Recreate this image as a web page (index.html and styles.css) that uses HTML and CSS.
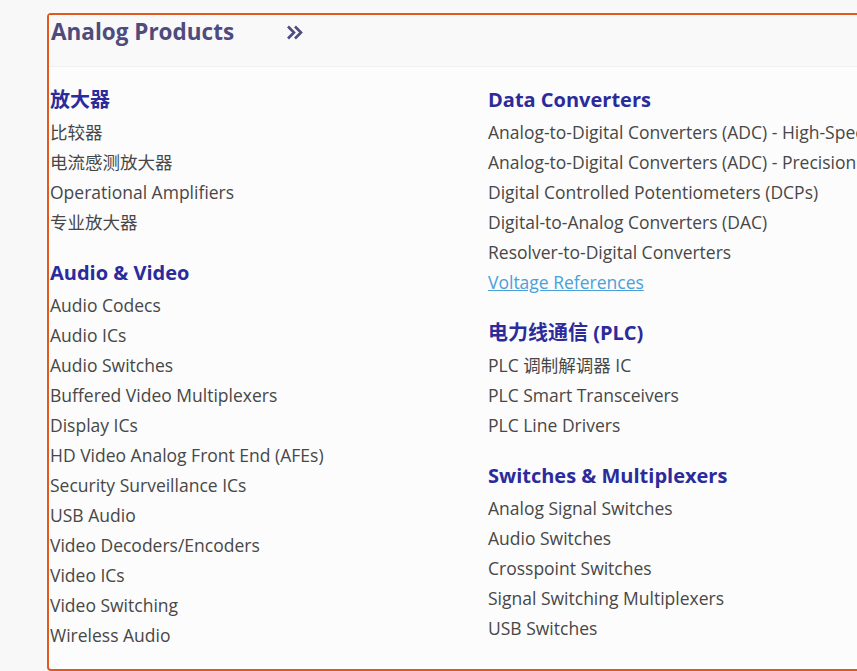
FILE: index.html
```html
<!DOCTYPE html>
<html lang="zh-CN">

<head>
    <meta charset="UTF-8">
    <meta name="viewport" content="width=device-width, initial-scale=1.0">
    <title>Analog Products</title>
    <link rel="stylesheet" href="styles.css">
</head>

<body>
    <div class="panel">
        <header class="panel-head">
            <h2>Analog Products</h2>
            <a class="more" href="#">
                <svg width="17" height="15" viewBox="0 0 17 15">
                    <path d="M2 1.5 L8 7.5 L2 13.5 M9 1.5 L15 7.5 L9 13.5" fill="none" stroke="#4f4b7d" stroke-width="2.6" />
                </svg>
            </a>
        </header>

        <div class="columns">
            <div class="col">
                <div class="group">
                    <h3>放大器</h3>
                    <ul>
                        <li><a href="#">比较器</a></li>
                        <li><a href="#">电流感测放大器</a></li>
                        <li><a href="#">Operational Amplifiers</a></li>
                        <li><a href="#">专业放大器</a></li>
                    </ul>
                </div>
                <div class="group">
                    <h3>Audio &amp; Video</h3>
                    <ul>
                        <li><a href="#">Audio Codecs</a></li>
                        <li><a href="#">Audio ICs</a></li>
                        <li><a href="#">Audio Switches</a></li>
                        <li><a href="#">Buffered Video Multiplexers</a></li>
                        <li><a href="#">Display ICs</a></li>
                        <li><a href="#">HD Video Analog Front End (AFEs)</a></li>
                        <li><a href="#">Security Surveillance ICs</a></li>
                        <li><a href="#">USB Audio</a></li>
                        <li><a href="#">Video Decoders/Encoders</a></li>
                        <li><a href="#">Video ICs</a></li>
                        <li><a href="#">Video Switching</a></li>
                        <li><a href="#">Wireless Audio</a></li>
                    </ul>
                </div>
            </div>

            <div class="col">
                <div class="group">
                    <h3>Data Converters</h3>
                    <ul>
                        <li><a href="#">Analog-to-Digital Converters (ADC) - High-Speed</a></li>
                        <li><a href="#">Analog-to-Digital Converters (ADC) - Precision</a></li>
                        <li><a href="#">Digital Controlled Potentiometers (DCPs)</a></li>
                        <li><a href="#">Digital-to-Analog Converters (DAC)</a></li>
                        <li><a href="#">Resolver-to-Digital Converters</a></li>
                        <li><a href="#" class="hover">Voltage References</a></li>
                    </ul>
                </div>
                <div class="group">
                    <h3>电力线通信 (PLC)</h3>
                    <ul>
                        <li><a href="#">PLC 调制解调器 IC</a></li>
                        <li><a href="#">PLC Smart Transceivers</a></li>
                        <li><a href="#">PLC Line Drivers</a></li>
                    </ul>
                </div>
                <div class="group">
                    <h3>Switches &amp; Multiplexers</h3>
                    <ul>
                        <li><a href="#">Analog Signal Switches</a></li>
                        <li><a href="#">Audio Switches</a></li>
                        <li><a href="#">Crosspoint Switches</a></li>
                        <li><a href="#">Signal Switching Multiplexers</a></li>
                        <li><a href="#">USB Switches</a></li>
                    </ul>
                </div>
            </div>
        </div>
    </div>
</body>

</html>
```

FILE: styles.css
```css
body {
    font-family: "Open Sans", "Noto Sans CJK SC", sans-serif;
    background-color: #f8f8f8;
    margin: 0;
    padding: 13px 0 0 47px;
    overflow: hidden;
}

.panel {
    width: 900px;
    height: 654px;
    border: 2px solid #e05a1e;
    border-radius: 4px;
    background-color: #fcfcfc;
    box-sizing: content-box;
}

.panel-head {
    display: flex;
    align-items: center;
    gap: 52px;
    height: 52px;
    padding-left: 2px;
    padding-bottom: 17px;
    background-color: #f9f9f9;
    border-bottom: 1px solid #f1f1f1;
    box-sizing: border-box;
}

.panel-head h2 {
    margin: 0;
    font-size: 22.5px;
    line-height: 34px;
    font-weight: 700;
    color: #4f4b7d;
}

.more {
    display: flex;
}

.columns {
    display: flex;
    padding: 16px 0 0 1px;
}

.col {
    width: 438px;
}

.group {
    margin-bottom: 19px;
}

.group h3 {
    margin: 0;
    font-size: 20px;
    line-height: 34px;
    font-weight: 700;
    color: #2b2b9b;
}

.group ul {
    list-style: none;
    margin: 0;
    padding: 0;
}

.group li {
    font-size: 17.5px;
    line-height: 30px;
    white-space: nowrap;
}

.group a {
    color: #474747;
    text-decoration: none;
}

.group a.hover {
    color: #4aa0d8;
    text-decoration: underline;
}
```
